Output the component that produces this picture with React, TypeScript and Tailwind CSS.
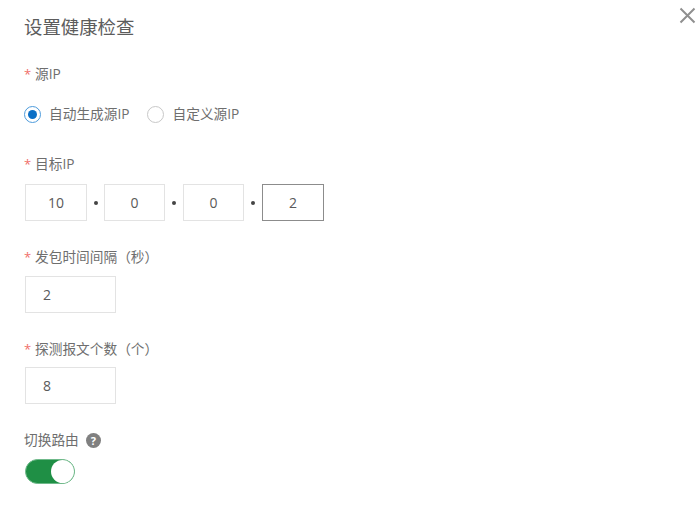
import React from "react";

function Label({ text }: { text: string }) {
  return (
    <div className="flex items-center h-5 text-[13.7px] leading-5 text-[#6e6e6e]">
      <span className="w-[10px] text-[#f0706a] text-[13px]">*</span>
      <span className="ml-[1px]">{text}</span>
    </div>
  );
}

function Box({ value, w, dark, left }: { value: string; w: string; dark?: boolean; left?: boolean }) {
  return (
    <div
      className={`${w} h-[37px] border flex items-center text-[14px] text-[#5a5a5a] ${dark ? "border-[#8c8c8c]" : "border-[#e3e3e3]"} ${left ? "pl-[17px]" : "justify-center"}`}
    >
      {value}
    </div>
  );
}

function Dot({ w }: { w: string }) {
  return (
    <div className={`${w} flex justify-center`}>
      <div className="w-[4px] h-[4px] rounded-full bg-[#444]" />
    </div>
  );
}

export default function App() {
  return (
    <div
      className="relative w-[700px] h-[506px] bg-white overflow-hidden pl-[24px] pt-[15px]"
      style={{ fontFamily: '"Open Sans", "Noto Sans CJK SC", sans-serif' }}
    >
      <svg className="absolute left-[679px] top-[7px]" width="17" height="17" viewBox="0 0 17 17" fill="none" stroke="#8f8f8f" strokeWidth="2">
        <path d="M1.5 1.5 15.5 15.5M15.5 1.5 1.5 15.5" />
      </svg>
      <h1 className="text-[18.4px] leading-[24px] h-[24px] font-normal text-[#5c5c5c]">设置健康检查</h1>

      <div className="mt-[25px]"><Label text="源IP" /></div>

      <div className="mt-[20px] flex items-center h-5 text-[13.7px] text-[#6e6e6e]">
        <span className="w-[17px] h-[17px] rounded-full border border-[#4d9bdc] flex items-center justify-center">
          <span className="w-[9px] h-[9px] rounded-full bg-[#0a6fc6]" />
        </span>
        <span className="ml-[8px]">自动生成源IP</span>
        <span className="ml-[17px] w-[17px] h-[17px] rounded-full border border-[#c8c8c8]" />
        <span className="ml-[9px]">自定义源IP</span>
      </div>

      <div className="mt-[30px]"><Label text="目标IP" /></div>

      <div className="mt-[10px] flex items-center ml-[1px]">
        <Box value="10" w="w-[62px]" />
        <Dot w="w-[17px]" />
        <Box value="0" w="w-[61px]" />
        <Dot w="w-[18px]" />
        <Box value="0" w="w-[61px]" />
        <Dot w="w-[18px]" />
        <Box value="2" w="w-[62px]" dark />
      </div>

      <div className="mt-[26px]"><Label text="发包时间间隔（秒）" /></div>
      <div className="mt-[9px] ml-[1px]"><Box value="2" w="w-[91px]" left /></div>

      <div className="mt-[26px]"><Label text="探测报文个数（个）" /></div>
      <div className="mt-[8px] ml-[1px]"><Box value="8" w="w-[91px]" left /></div>

      <div className="mt-[26px] flex items-center h-5 text-[13.7px] text-[#6e6e6e]">
        <span>切换路由</span>
        <span className="ml-[7px] w-[15px] h-[15px] rounded-full bg-[#808080] text-white text-[11px] leading-[15px] font-bold text-center">?</span>
      </div>

      <div className="mt-[9px] ml-[1px] w-[50px] h-[25px] rounded-full bg-[#1f8f45] border border-[#6fb98a] flex justify-end items-center">
        <div className="w-[23px] h-[23px] rounded-full bg-white" />
      </div>
    </div>
  );
}
